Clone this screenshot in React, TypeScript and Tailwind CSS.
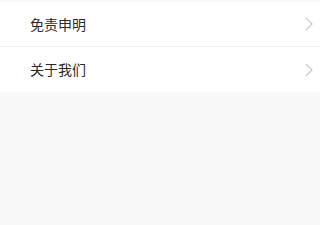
import React from 'react';

const items = ['免责申明', '关于我们'];

function Chevron() {
  return (
    <svg width="8" height="14" viewBox="0 0 8 14" fill="none">
      <polyline points="1,1 7,7 1,13" stroke="#c8c8c8" strokeWidth="1.2" />
    </svg>
  );
}

export default function App() {
  return (
    <div
      className="min-h-screen bg-[#f8f8f8] pt-[2px]"
      style={{ fontFamily: '"Noto Sans CJK SC", "Noto Sans", sans-serif' }}
    >
      <div className="bg-white">
        {items.map((label, i) => (
          <div
            key={label}
            className={`flex items-center justify-between h-[45px] pl-[30px] pr-[7px] ${
              i === 0 ? 'border-b border-[#f0f0f0]' : ''
            }`}
          >
            <span className="text-[14px] text-[#2a2a2a]">{label}</span>
            <Chevron />
          </div>
        ))}
      </div>
    </div>
  );
}
